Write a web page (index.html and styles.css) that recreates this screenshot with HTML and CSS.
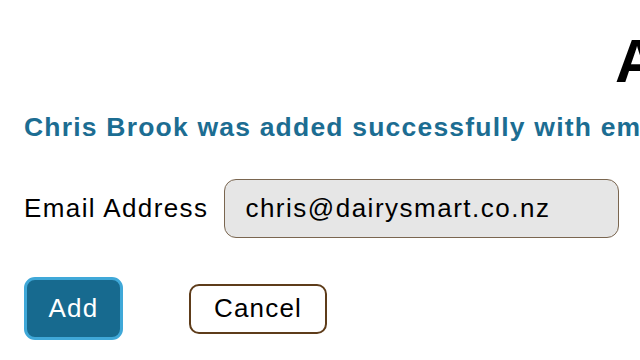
FILE: index.html
```html
<!DOCTYPE html>
<html lang="en">
<head>
    <meta charset="UTF-8">
    <meta name="viewport" content="width=device-width, initial-scale=1.0">
    <title>Add User</title>
    <link rel="stylesheet" href="styles.css">
</head>
<body>
    <h1 class="page-title">Add User</h1>

    <p class="success-msg">Chris Brook was added successfully with email chris@dairysmart.co.nz</p>

    <form class="user-form" onsubmit="return false">
        <div class="form-row">
            <label class="form-label" for="email">Email Address</label>
            <input class="form-input" id="email" type="email" value="chris@dairysmart.co.nz">
        </div>

        <div class="form-actions">
            <button class="btn btn-add" type="submit">Add</button>
            <button class="btn btn-cancel" type="button">Cancel</button>
        </div>
    </form>
</body>
</html>
```

FILE: styles.css
```css
html, body {
    overflow: hidden;
}

body {
    font-family: "Liberation Sans", Arial, sans-serif;
    margin: 0;
    padding: 0 0 0 24px;
    background: white;
    color: #000;
    letter-spacing: 1.2px;
}

.page-title {
    margin: 31px 0 0 0;
    padding-left: 591px;
    font-size: 61px;
    line-height: 61px;
    font-weight: bold;
    letter-spacing: 0;
    white-space: nowrap;
}

.success-msg {
    margin: 20px 0 0 0;
    font-size: 26.5px;
    line-height: 30px;
    font-weight: bold;
    color: #1c6d92;
    white-space: nowrap;
    letter-spacing: 1.2px;
}

.form-row {
    display: flex;
    align-items: center;
    gap: 16px;
    margin-top: 37px;
}

.form-label {
    font-size: 26px;
    letter-spacing: 1.4px;
}

.form-input {
    box-sizing: border-box;
    width: 395px;
    height: 59px;
    padding: 0 0 0 20px;
    border: 1px solid #7a6650;
    border-radius: 12px;
    background: #e6e6e6;
    font-family: inherit;
    font-size: 26px;
    letter-spacing: 1.5px;
    color: #000;
}

.form-actions {
    display: flex;
    align-items: center;
    gap: 66px;
    margin-top: 39px;
}

.btn {
    box-sizing: border-box;
    font-family: inherit;
    font-size: 26px;
    letter-spacing: 1.2px;
    cursor: pointer;
    padding: 0;
}

.btn-add {
    width: 99px;
    height: 63px;
    background: #176a8f;
    color: white;
    border: 3px solid #3fa8d8;
    border-radius: 11px;
}

.btn-cancel {
    width: 138px;
    height: 50px;
    background: white;
    color: #000;
    border: 2px solid #5e3c1a;
    border-radius: 10px;
}
```
